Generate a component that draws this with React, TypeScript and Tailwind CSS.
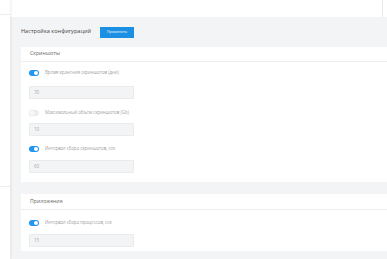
import { useState } from 'react';

interface Field {
  label: string;
  value: string;
  enabled: boolean;
}

function Toggle({ on }: { on: boolean }) {
  return (
    <div
      className={
        on
          ? 'relative h-[6px] w-[10px] shrink-0 rounded-full bg-[#2196f3]'
          : 'relative h-[6px] w-[10px] shrink-0 rounded-full bg-[#ededed]'
      }
    >
      <div
        className={
          on
            ? 'absolute right-[1px] top-[1px] h-[4px] w-[4px] rounded-full bg-white'
            : 'absolute left-[0px] top-[0px] h-[6px] w-[6px] rounded-full bg-[#f7f7f7] shadow-[0_0_1px_rgba(0,0,0,0.2)]'
        }
      />
    </div>
  );
}

function FieldRow({ field, gapTop }: { field: Field; gapTop: string }) {
  return (
    <div className={`flex h-[7px] items-center gap-[6px] ${gapTop}`}>
      <Toggle on={field.enabled} />
      <span className="text-[4.5px] font-light leading-none text-[#666]">{field.label}</span>
    </div>
  );
}

function ValueBox({ value, gapTop }: { value: string; gapTop: string }) {
  return (
    <div className={`flex h-[13px] w-[105px] items-center rounded-[1px] border border-[#ebebeb] bg-[#f3f4f6] pl-[4px] ${gapTop}`}>
      <span className="text-[4.5px] font-light leading-none text-[#777]">{value}</span>
    </div>
  );
}

export default function App() {
  const [screens] = useState<Field[]>([
    { label: 'Время хранения скриншотов (дни)', value: '30', enabled: true },
    { label: 'Максимальный объем скриншотов (Gb)', value: '10', enabled: false },
    { label: 'Интервал сбора скриншотов, сек', value: '60', enabled: true },
  ]);
  const apps: Field = { label: 'Интервал сбора процессов, сек', value: '15', enabled: true };

  return (
    <div className="flex h-[259px] w-[387px] overflow-hidden bg-[#f3f4f6] font-['Open_Sans',sans-serif]">
      {/* боковая панель */}
      <div className="z-10 w-[10px] shrink-0 bg-white shadow-[1px_0_3px_rgba(0,0,0,0.08)]">
        <div className="h-[15px] border-b border-[#ececec]" />
        <div className="h-[172px] border-b border-[#ececec]" />
      </div>

      <div className="flex min-w-0 flex-1 flex-col">
        <div className="h-[17px] shrink-0 bg-white">
          <div className="h-full w-[373px] border-r border-[#e6e6e6]" />
        </div>

        <div className="flex h-[30px] shrink-0 items-center pl-[11px]">
          <span className="w-[79px] text-[5.6px] leading-none text-[#444]">Настройка конфигураций</span>
          <button className="h-[11px] w-[34px] bg-[#1a8fe3] text-[3.6px] leading-none text-white">
            Применить
          </button>
        </div>

        <div className="ml-[11px] flex flex-col bg-white">
          <div className="flex h-[15px] items-center border-b border-[#eeeeee] pl-[9px]">
            <span className="text-[5.2px] leading-none text-[#666]">Скриншоты</span>
          </div>
          <div className="flex flex-col px-[8px] pb-[9px] pt-[7px]">
            <FieldRow field={screens[0]} gapTop="" />
            <ValueBox value={screens[0].value} gapTop="mt-[10px]" />
            <FieldRow field={screens[1]} gapTop="mt-[10px]" />
            <ValueBox value={screens[1].value} gapTop="mt-[7px]" />
            <FieldRow field={screens[2]} gapTop="mt-[9px]" />
            <ValueBox value={screens[2].value} gapTop="mt-[8px]" />
          </div>
        </div>

        <div className="ml-[11px] mt-[12px] flex flex-col bg-white">
          <div className="flex h-[16px] items-center border-b border-[#eeeeee] pl-[9px]">
            <span className="text-[5.2px] leading-none text-[#666]">Приложения</span>
          </div>
          <div className="flex flex-col px-[8px] pb-[4px] pt-[9px]">
            <FieldRow field={apps} gapTop="" />
            <ValueBox value={apps.value} gapTop="mt-[8px]" />
          </div>
        </div>
      </div>
    </div>
  );
}
